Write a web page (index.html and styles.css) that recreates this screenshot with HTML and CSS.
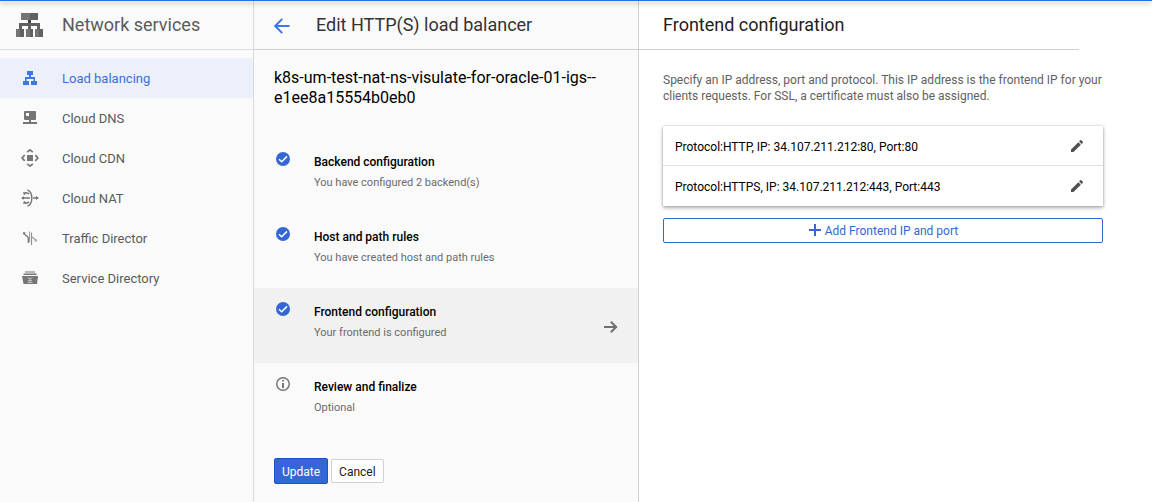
FILE: index.html
```html
<!DOCTYPE html>
<html lang="en">
<head>
<meta charset="utf-8">
<title>Edit HTTP(S) load balancer</title>
<link rel="stylesheet" href="styles.css">
</head>
<body>
<div class="topbar"></div>
<div class="app">
  <nav class="sidebar">
    <header class="product">
      <svg class="product-icon" width="27" height="25" viewBox="0 0 27 25" shape-rendering="crispEdges">
        <path fill="#757575" d="M5 0h9v7H5zM0 16h4v8H0zM10 16h4v8h-4zM19 16h4v8h-4z"/>
        <path fill="#616161" d="M14 0h8v7h-8zM4 16h4v8H4zM14 16h3v8h-3zM23 16h4v8h-4zM3 10h21v6h-3v-3h-6v3h-3v-3H6v3H3z"/>
        <path fill="#424242" d="M12 7h3v3h-3z"/>
      </svg>
      <h1>Network services</h1>
    </header>
    <ul class="nav">
      <li class="nav-item active">
        <svg width="18" height="18" viewBox="0 0 18 18" fill="#3b78e7"><path d="M6 2h6v4h-2v2h4v4h2v4h-6v-4h2.500v-2h-7v2H8v4H2v-4h2V8h4V6H6z"/></svg>
        <span>Load balancing</span>
      </li>
      <li class="nav-item">
        <svg width="18" height="18" viewBox="0 0 18 18" fill="#757575"><path fill-rule="evenodd" d="M4 2h10q1 0 1 1v7q0 1-1 1h-4v2h6v2H2v-2h6v-2H4q-1 0-1-1V3q0-1 1-1zM5 4v3h3V4z"/></svg>
        <span>Cloud DNS</span>
      </li>
      <li class="nav-item">
        <svg width="18" height="18" viewBox="0 0 18 18"><path fill="#757575" d="M6 6h6v6H6z"/><path fill="none" stroke="#757575" stroke-width="1.700" d="M6.200 3.200L9 .9l2.800 2.300M6.200 14.800L9 17.100l2.800-2.300M3.700 6.200L1.100 9l2.600 2.800M14.300 6.200L16.900 9l-2.600 2.800"/></svg>
        <span>Cloud CDN</span>
      </li>
      <li class="nav-item">
        <svg width="18" height="18" viewBox="0 0 18 18"><g fill="none" stroke="#757575" stroke-width="1.400"><path d="M6.500.8C12.300 3.500 12.300 14.500 6.500 17.200M1 9h8M12 9h4M3 4.900c2-1.600 3.500-1.400 5 .3M3 13.100c2 1.600 3.500 1.400 5-.3"/></g><path fill="#757575" d="M15 7l3 2-3 2zM3 7.300L0 9l3 1.700zM2 3l3.500 1-2.500 2.300zM2 15l3.500-1L3 11.700z"/></svg>
        <span>Cloud NAT</span>
      </li>
      <li class="nav-item">
        <svg width="18" height="18" viewBox="0 0 18 18"><g fill="none"><path stroke="#757575" stroke-width="1.300" d="M3 4.500l4.300 4V14"/><path stroke="#a0a0a0" stroke-width="1" d="M8.500 2.500V13"/><path stroke="#909090" stroke-width="1.200" d="M10.500 3.500v12.500"/><path stroke="#a0a0a0" stroke-width="1.300" d="M11 8l4.300 3.500"/></g><path fill="#757575" d="M2 3.300h2.800L2.300 5.800z"/><path fill="#a0a0a0" d="M15.800 10v2.500h-3z"/></svg>
        <span>Traffic Director</span>
      </li>
      <li class="nav-item">
        <svg width="18" height="18" viewBox="0 0 18 18"><path fill="#757575" d="M4 2.500h10v1H4zM2.500 4.500h13V6h-13zM1 7h16l-1 8H2.500z"/><path fill="none" stroke="#c0c0c0" stroke-width="1" d="M6.500 8.500l1.500 1h2l1.500-1M7 11.500h4M9 9.500v4M6.500 13.500h5"/></svg>
        <span>Service Directory</span>
      </li>
    </ul>
  </nav>

  <section class="steps">
    <header class="steps-head">
      <svg width="16" height="16" viewBox="0 0 16 16" fill="none" stroke="#3b78e7" stroke-width="1.900"><path d="M15.500 8H1.500M8.300.8L1.200 8l7.100 7.200"/></svg>
      <h2>Edit HTTP(S) load balancer</h2>
    </header>
    <div class="resource-name">k8s-um-test-nat-ns-visulate-for-oracle-01-igs--<br>e1ee8a15554b0eb0</div>
    <ol class="step-list">
      <li class="step">
        <svg class="mark" width="14" height="14" viewBox="0 0 14 14"><circle cx="7" cy="7" r="7" fill="#3367d6"/><path fill="none" stroke="#fff" stroke-width="1.500" d="M3 7.200l2.700 2.600 5.300-5.400"/></svg>
        <div class="step-text"><h3>Backend configuration</h3><p>You have configured 2 backend(s)</p></div>
      </li>
      <li class="step">
        <svg class="mark" width="14" height="14" viewBox="0 0 14 14"><circle cx="7" cy="7" r="7" fill="#3367d6"/><path fill="none" stroke="#fff" stroke-width="1.500" d="M3 7.200l2.700 2.600 5.300-5.400"/></svg>
        <div class="step-text"><h3>Host and path rules</h3><p>You have created host and path rules</p></div>
      </li>
      <li class="step current">
        <svg class="mark" width="14" height="14" viewBox="0 0 14 14"><circle cx="7" cy="7" r="7" fill="#3367d6"/><path fill="none" stroke="#fff" stroke-width="1.500" d="M3 7.200l2.700 2.600 5.300-5.400"/></svg>
        <div class="step-text"><h3>Frontend configuration</h3><p>Your frontend is configured</p></div>
        <svg class="go" width="14" height="12" viewBox="0 0 14 12" fill="none" stroke="#707070" stroke-width="2"><path d="M0 6h12.500M6.800.7L12.200 6l-5.400 5.300"/></svg>
      </li>
      <li class="step">
        <svg class="mark" width="14" height="14" viewBox="0 0 14 14"><circle cx="7" cy="7" r="6.250" fill="none" stroke="#757575" stroke-width="1.500"/><path fill="#757575" d="M6 3h2v1.600H6zM6 6h2v5H6z"/></svg>
        <div class="step-text"><h3>Review and finalize</h3><p>Optional</p></div>
      </li>
    </ol>
    <div class="actions">
      <button class="btn primary">Update</button>
      <button class="btn">Cancel</button>
    </div>
  </section>

  <main class="detail">
    <h2 class="detail-head">Frontend configuration</h2>
    <div class="detail-body">
      <p class="hint">Specify an IP address, port and protocol. This IP address is the frontend IP for your<br>clients requests. For SSL, a certificate must also be assigned.</p>
      <div class="cards">
        <div class="card-row"><span>Protocol:HTTP, IP: 34.107.211.212:80, Port:80</span>
          <svg width="12" height="12" viewBox="3 3 18 18" fill="#505050"><path d="M3 17.250V21h3.750L17.810 9.940l-3.750-3.750zM20.710 7.040a1 1 0 0 0 0-1.410l-2.340-2.340a1 1 0 0 0-1.410 0l-1.830 1.830 3.750 3.750z"/></svg></div>
        <div class="card-row"><span>Protocol:HTTPS, IP: 34.107.211.212:443, Port:443</span>
          <svg width="12" height="12" viewBox="3 3 18 18" fill="#505050"><path d="M3 17.250V21h3.750L17.810 9.940l-3.750-3.750zM20.710 7.040a1 1 0 0 0 0-1.410l-2.340-2.340a1 1 0 0 0-1.410 0l-1.830 1.830 3.750 3.750z"/></svg></div>
      </div>
      <button class="add"><svg width="12" height="12" viewBox="0 0 12 12" fill="#3367d6"><path d="M5 0h2v5h5v2H7v5H5V7H0V5h5z"/></svg><span>Add Frontend IP and port</span></button>
    </div>
  </main>
</div>
</body>
</html>
```
FILE: styles.css
```css
* { box-sizing: border-box; }
body { margin: 0; height: 502px; overflow: hidden; background: #fff; font-family: Roboto, sans-serif; font-size: 12px; color: #000; }
h1, h2, h3, p, ul, ol { margin: 0; padding: 0; font-weight: 400; }
ul, ol { list-style: none; }
svg { display: block; flex: none; }
.topbar { position: absolute; top: 0; left: 0; right: 0; height: 1px; background: #1a73e8; box-shadow: 0 2px 5px rgba(0,0,0,.5); z-index: 2; }
.app { display: grid; grid-template-columns: 254px 385px 1fr; height: 502px; }
.sidebar, .steps { background: #fafafa; border-right: 1px solid #d0d0d0; }
.sidebar { border-right-color: #dadada; }

.product { display: flex; height: 50px; padding: 0 0 0 16px; border-bottom: 1px solid #dcdcdc; gap: 19px; }
.product-icon { margin-top: 13px; }
.product h1 { font-size: 18px; line-height: 49px; color: #5a5a5a; }
.nav { padding-top: 8px; }
.nav-item { display: flex; align-items: center; height: 40px; padding-left: 21px; gap: 23px; font-size: 13px; color: #5a5a5a; }
.nav-item.active { background: #ecf0fb; color: #3b6fdc; }

.steps-head { display: flex; align-items: center; gap: 26px; height: 50px; padding-left: 20px; border-bottom: 1px solid #d0d0d0; }
.steps-head svg { margin-top: 3px; }
.steps-head h2 { font-size: 18px; line-height: 49px; color: #333; }
.resource-name { padding: 18px 20px 0; font-size: 16px; line-height: 20px; height: 88px; }
.step { display: flex; height: 75px; padding: 14px 20px 0 22px; gap: 24px; }
.step.current { background: #f1f1f1; }
.step h3 { font-size: 12px; font-weight: 500; line-height: 20px; }
.step p { font-size: 11px; line-height: 20px; color: #6b6b6b; margin-top: 1px; }
.go { margin: 19px 0 0 auto; }
.actions { display: flex; align-items: center; gap: 3px; padding: 20px; }
.btn { height: 24px; padding: 2px 7px 0; border: 1px solid #d0d0d0; border-radius: 2px; background: #fff; font: 12px Roboto, sans-serif; color: #212121; }
.btn.primary { height: 26px; border-color: #1a53c8; background: #3367d6; color: #fff; }

.detail-head { width: 440px; height: 50px; padding-left: 24px; border-bottom: 1px solid #d0d0d0; font-size: 18px; line-height: 49px; color: #212121; }
.detail-body { padding: 22px 48px 0 24px; }
.hint { color: #616161; line-height: 16px; white-space: nowrap; }
.cards { width: 440px; margin-top: 22px; height: 80px; box-shadow: 0 0 2px rgba(0,0,0,.24), 0 2px 4px rgba(0,0,0,.3); }
.card-row { display: flex; align-items: center; justify-content: space-between; height: 40px; padding: 0 20px 0 12px; }
.card-row span { padding-top: 2px; }
.card-row:first-child { border-bottom: 1px solid #e0e0e0; }
.add { display: flex; align-items: center; justify-content: center; gap: 4px; width: 440px; height: 25px; margin-top: 12px; padding: 0 0 1px 1px; border: 1px solid #3367d6; border-radius: 2px; background: #fff; font: 12px Roboto, sans-serif; color: #3367d6; }
.add span { padding-top: 1px; }
```
